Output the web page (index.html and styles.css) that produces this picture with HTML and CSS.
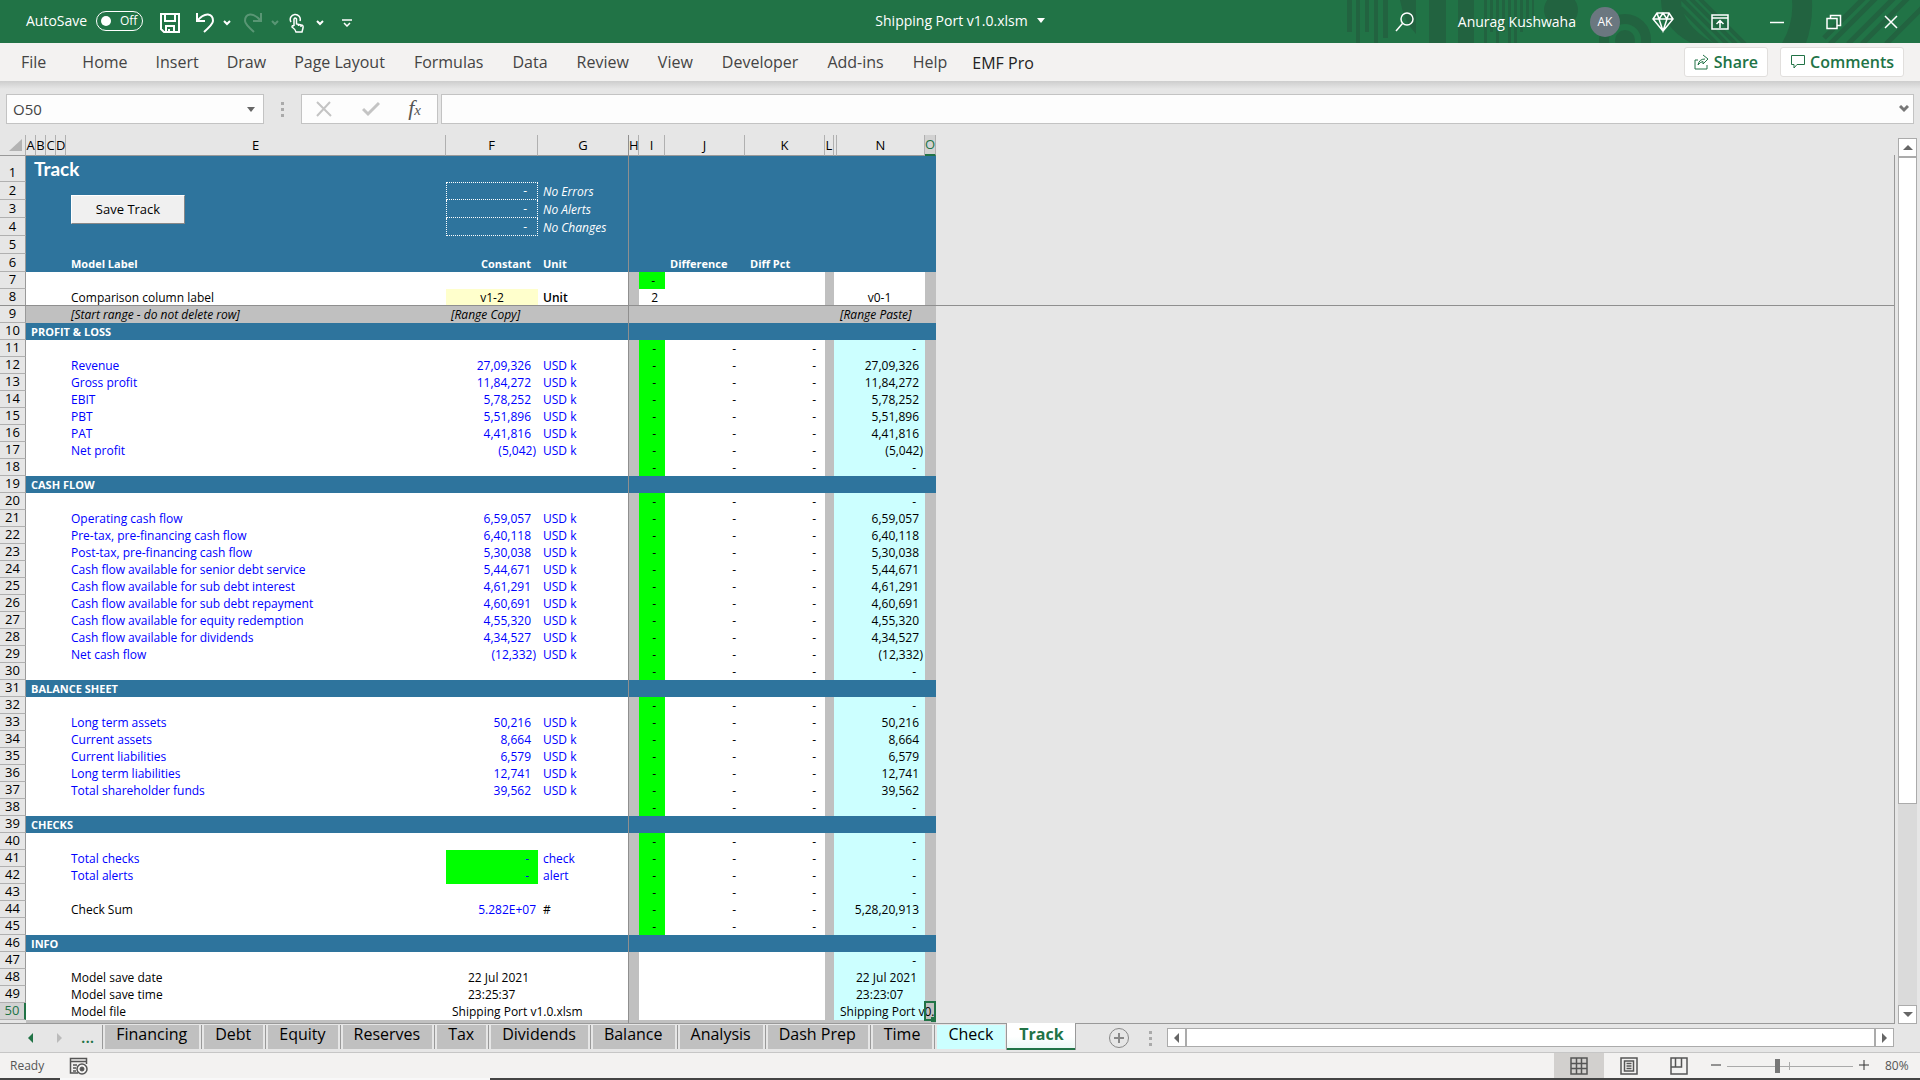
FILE: index.html
```
<!DOCTYPE html>
<html lang="en">
<head>
<meta charset="utf-8">
<title>Shipping Port v1.0.xlsm</title>
<link rel="stylesheet" href="styles.css">
</head>
<body>
<header class="titlebar">
  <svg class="deco" width="590" height="43" viewBox="1330 0 590 43" aria-hidden="true">
    <g fill="#226340">
      <path d="M1347 0h5v32h-5zM1356 0h4v43h-4zM1365 0h4v32h-4zM1374 0h4v43h-4zM1383 0h5v38h-5zM1400 0h16v34q-12-12-16-34zM1429 0h17v43h-17zM1458 0h16v43h-16z"/>
      <path d="M1484 0h3v43h-3zM1490 0h3v32h-3zM1496 0h3v43h-3zM1502 0h3v32h-3zM1508 0h3v43h-3zM1514 0h3v43h-3zM1520 0h3v32h-3zM1526 0h3v26h-3zM1532 0h2v18h-2z"/>
      <circle cx="1561" cy="10" r="17"/><circle cx="1625" cy="40" r="10"/>
      <path d="M1661 0h20q0 24 32 43h-22q-30-16-30-43zM1792 0h20q1 24-6 43h-24q12-20 10-43z"/>
    </g>
    <g fill="none" stroke="#226340">
      <circle cx="1625" cy="40" r="21" stroke-width="10"/>
      <path stroke-width="4" d="M1681 8l36 36M1681-2l46 46M1688-4l48 48M1697-4l48 48"/>
      <path stroke-width="5" d="M1824 38l40-40M1830 44l46-46M1848 44l46-46M1862 44l46-46M1886 44l36-36"/>
    </g>
  </svg>
  <div class="quick">
    <span>AutoSave</span>
    <button class="toggle" aria-pressed="false"><i></i>Off</button>
    <button class="save" aria-label="Save"><svg width="20" height="20" viewBox="0 0 20 20"><path d="M1 1h18v18H4l-3-3zM5 1v7h10V1M6 19v-6h8v6M9 19v-3"/></svg></button>
    <button aria-label="Undo"><svg width="20" height="20" viewBox="0 0 20 20"><path stroke-width="2" d="M2 0v8h8M2 8Q8 1 13 1.500Q18 2 18 8Q18 11 9 19"/></svg></button>
    <button aria-label="Undo history"><svg width="8" height="6" viewBox="0 0 8 6"><path stroke-width="2" d="M1 1l3 3 3-3"/></svg></button>
    <button class="dim" aria-label="Redo"><svg width="20" height="20" viewBox="0 0 20 20"><path stroke-width="2" d="M18 0v8h-8M18 8Q12 1 7 1.500Q2 2 2 8Q2 11 11 19"/></svg></button>
    <button class="dim" aria-label="Redo history"><svg width="8" height="6" viewBox="0 0 8 6"><path stroke-width="2" d="M1 1l3 3 3-3"/></svg></button>
    <button aria-label="Touch mode"><svg width="16" height="20" viewBox="0 0 16 20"><path stroke-width="1.500" d="M2 9a5 5 0 1 1 9-1M5 13V6q1-2 2.500 0v5l5 1q2 0 1.500 3l-1 4H7q-1-3-4-5 0-2 2-1M9.500 11v2M12 12v2"/></svg></button>
    <button aria-label="Touch mode options"><svg width="8" height="6" viewBox="0 0 8 6"><path stroke-width="2" d="M1 1l3 3 3-3"/></svg></button>
    <button class="custom" aria-label="Customize toolbar"><svg width="10" height="8" viewBox="0 0 10 8"><path stroke-width="1.500" d="M0 1h10M2 4l3 3 3-3"/></svg></button>
  </div>
  <button class="docname">Shipping Port v1.0.xlsm <i class="caret"></i></button>
  <div class="account">
    <button aria-label="Search"><svg width="24" height="24" viewBox="0 0 24 24"><circle cx="14" cy="9" r="6"/><path d="M9.500 13.500L3 21"/></svg></button>
    <span class="user">Anurag Kushwaha</span><span class="avatar">AK</span>
    <div class="winctl">
      <button aria-label="Premium"><svg width="24" height="24" viewBox="0 0 24 24"><path d="M6 3h12l4 6-10 12L2 9zM2 9h20M6 3l2 6 4 12 4-12 2-6M8 9l4-6 4 6"/></svg></button>
      <button aria-label="Ribbon display options"><svg width="24" height="24" viewBox="0 0 24 24"><path d="M4 5h16v14H4zM4 8h16M12 18v-7M8.500 14l3.500-3.500 3.500 3.500"/></svg></button>
      <button aria-label="Minimize"><svg width="24" height="24" viewBox="0 0 24 24"><path d="M5 12.500h14"/></svg></button>
      <button aria-label="Restore"><svg width="24" height="24" viewBox="0 0 24 24"><path d="M5 8.500h10v10H5zM8.500 8V5.500h10v10H15"/></svg></button>
      <button aria-label="Close"><svg width="24" height="24" viewBox="0 0 24 24"><path d="M6 6l12 12M18 6L6 18"/></svg></button>
    </div>
  </div>
</header>

<nav class="ribbon">
  <button class="file">File</button><button>Home</button><button>Insert</button><button>Draw</button><button>Page Layout</button><button>Formulas</button><button>Data</button><button>Review</button><button>View</button><button>Developer</button><button>Add-ins</button><button>Help</button><button class="addin">EMF Pro</button>
  <div class="collab">
    <button><svg width="16" height="16" viewBox="0 0 16 16"><path d="M4 6H1v9h12v-4M4 11q1-6 7-6M9 1l5 4-5 5V7.500Q6 8 4 11"/></svg>Share</button>
    <button><svg width="16" height="16" viewBox="0 0 16 16"><path d="M1.500 1.500h13v9H7l-3 3.500v-3.500H1.500z"/></svg>Comments</button>
  </div>
</nav>

<div class="formula">
  <div class="namebox"><input type="text" value="O50" aria-label="Name box"><button aria-label="Names"><i class="caret"></i></button></div>
  <span class="dots"><i></i><i></i><i></i></span>
  <div class="fxbox">
    <button aria-label="Cancel"><svg width="18" height="16" viewBox="0 0 18 16"><path d="M2 1l14 14M15 1L2 15"/></svg></button>
    <button aria-label="Enter"><svg width="18" height="16" viewBox="0 0 18 16"><path stroke-width="3" d="M1 8l5 5L17 2"/></svg></button>
    <button class="fx" aria-label="Insert function"><em>f</em><em class="x">x</em></button>
  </div>
  <div class="entry"><input type="text" aria-label="Formula"><button aria-label="Expand formula bar"><svg width="10" height="8" viewBox="0 0 10 8"><path d="M1 1l4 4 4-4"/></svg></button></div>
</div>

<main class="work">
<div class="pane">
<span class="split-h"></span><span class="split-v"></span>
<table class="sheet">
<colgroup><col class="w26"><col class="w10"><col class="w10"><col class="w10"><col class="w10"><col class="w380"><col class="w92"><col class="w91"><col class="w10"><col class="w26"><col class="w80"><col class="w80"><col class="w9"><col class="w3"><col class="w88"><col class="w11"></colgroup>
<thead><tr><th class="corner"><i></i><th>A<th>B<th>C<th>D<th>E<th>F<th>G<th>H<th>I<th>J<th>K<th>L<th><th>N<th class="on">O</tr></thead>
<tbody class="top">
<tr class="r1"><th>1<td class="title" colspan="15">Track</tr>
<tr><th>2<td colspan="4"><td class="host"><button class="savetrack">Save Track</button><td class="box first d">-<td class="i">No Errors<td colspan="8"></tr>
<tr><th>3<td colspan="4"><td><td class="box d">-<td class="i">No Alerts<td colspan="8"></tr>
<tr><th>4<td colspan="4"><td><td class="box d">-<td class="i">No Changes<td colspan="8"></tr>
<tr><th>5<td colspan="15"></tr>
<tr class="heads"><th>6<td colspan="4"><td>Model Label<td class="n">Constant<td>Unit<td><td><td>Difference<td>Diff Pct<td colspan="4"></tr>
</tbody>
<tbody class="labels">
<tr><th>7<td colspan="4"><td><td><td><td><td class="ok d">-<td><td><td><td colspan="2"><td></tr>
<tr><th>8<td colspan="4"><td>Comparison column label<td class="input c">v1-2<td class="b">Unit<td><td class="n">2<td><td><td><td class="c" colspan="2">v0-1<td></tr>
</tbody>
<tbody>
<tr class="range"><th>9<td colspan="4"><td>[Start range - do not delete row]<td>[Range Copy]<td><td><td><td><td><td><td class="paste" colspan="2">[Range Paste]<td></tr>
<tr class="sec"><th>10<td colspan="15">PROFIT &amp; LOSS</tr>
</tbody>
<tbody class="data">
<tr><th>11<td colspan="4"><td><td><td><td><td>-<td>-<td>-<td><td class="d" colspan="2">-<td></tr>
<tr><th>12<td colspan="4"><td>Revenue<td>27,09,326<td>USD k<td><td>-<td>-<td>-<td><td colspan="2">27,09,326<td></tr>
<tr><th>13<td colspan="4"><td>Gross profit<td>11,84,272<td>USD k<td><td>-<td>-<td>-<td><td colspan="2">11,84,272<td></tr>
<tr><th>14<td colspan="4"><td>EBIT<td>5,78,252<td>USD k<td><td>-<td>-<td>-<td><td colspan="2">5,78,252<td></tr>
<tr><th>15<td colspan="4"><td>PBT<td>5,51,896<td>USD k<td><td>-<td>-<td>-<td><td colspan="2">5,51,896<td></tr>
<tr><th>16<td colspan="4"><td>PAT<td>4,41,816<td>USD k<td><td>-<td>-<td>-<td><td colspan="2">4,41,816<td></tr>
<tr><th>17<td colspan="4"><td>Net profit<td class="neg">(5,042)<td>USD k<td><td>-<td>-<td>-<td><td class="neg" colspan="2">(5,042)<td></tr>
<tr><th>18<td colspan="4"><td><td><td><td><td>-<td>-<td>-<td><td class="d" colspan="2">-<td></tr>
<tr class="sec"><th>19<td colspan="15">CASH FLOW</tr>
<tr><th>20<td colspan="4"><td><td><td><td><td>-<td>-<td>-<td><td class="d" colspan="2">-<td></tr>
<tr><th>21<td colspan="4"><td>Operating cash flow<td>6,59,057<td>USD k<td><td>-<td>-<td>-<td><td colspan="2">6,59,057<td></tr>
<tr><th>22<td colspan="4"><td>Pre-tax, pre-financing cash flow<td>6,40,118<td>USD k<td><td>-<td>-<td>-<td><td colspan="2">6,40,118<td></tr>
<tr><th>23<td colspan="4"><td>Post-tax, pre-financing cash flow<td>5,30,038<td>USD k<td><td>-<td>-<td>-<td><td colspan="2">5,30,038<td></tr>
<tr><th>24<td colspan="4"><td>Cash flow available for senior debt service<td>5,44,671<td>USD k<td><td>-<td>-<td>-<td><td colspan="2">5,44,671<td></tr>
<tr><th>25<td colspan="4"><td>Cash flow available for sub debt interest<td>4,61,291<td>USD k<td><td>-<td>-<td>-<td><td colspan="2">4,61,291<td></tr>
<tr><th>26<td colspan="4"><td>Cash flow available for sub debt repayment<td>4,60,691<td>USD k<td><td>-<td>-<td>-<td><td colspan="2">4,60,691<td></tr>
<tr><th>27<td colspan="4"><td>Cash flow available for equity redemption<td>4,55,320<td>USD k<td><td>-<td>-<td>-<td><td colspan="2">4,55,320<td></tr>
<tr><th>28<td colspan="4"><td>Cash flow available for dividends<td>4,34,527<td>USD k<td><td>-<td>-<td>-<td><td colspan="2">4,34,527<td></tr>
<tr><th>29<td colspan="4"><td>Net cash flow<td class="neg">(12,332)<td>USD k<td><td>-<td>-<td>-<td><td class="neg" colspan="2">(12,332)<td></tr>
<tr><th>30<td colspan="4"><td><td><td><td><td>-<td>-<td>-<td><td class="d" colspan="2">-<td></tr>
<tr class="sec"><th>31<td colspan="15">BALANCE SHEET</tr>
<tr><th>32<td colspan="4"><td><td><td><td><td>-<td>-<td>-<td><td class="d" colspan="2">-<td></tr>
<tr><th>33<td colspan="4"><td>Long term assets<td>50,216<td>USD k<td><td>-<td>-<td>-<td><td colspan="2">50,216<td></tr>
<tr><th>34<td colspan="4"><td>Current assets<td>8,664<td>USD k<td><td>-<td>-<td>-<td><td colspan="2">8,664<td></tr>
<tr><th>35<td colspan="4"><td>Current liabilities<td>6,579<td>USD k<td><td>-<td>-<td>-<td><td colspan="2">6,579<td></tr>
<tr><th>36<td colspan="4"><td>Long term liabilities<td>12,741<td>USD k<td><td>-<td>-<td>-<td><td colspan="2">12,741<td></tr>
<tr><th>37<td colspan="4"><td>Total shareholder funds<td>39,562<td>USD k<td><td>-<td>-<td>-<td><td colspan="2">39,562<td></tr>
<tr><th>38<td colspan="4"><td><td><td><td><td>-<td>-<td>-<td><td class="d" colspan="2">-<td></tr>
<tr class="sec"><th>39<td colspan="15">CHECKS</tr>
<tr><th>40<td colspan="4"><td><td><td><td><td>-<td>-<td>-<td><td class="d" colspan="2">-<td></tr>
<tr><th>41<td colspan="4"><td>Total checks<td class="ok d">-<td>check<td><td>-<td>-<td>-<td><td class="d" colspan="2">-<td></tr>
<tr><th>42<td colspan="4"><td>Total alerts<td class="ok d">-<td>alert<td><td>-<td>-<td>-<td><td class="d" colspan="2">-<td></tr>
<tr><th>43<td colspan="4"><td><td><td><td><td>-<td>-<td>-<td><td class="d" colspan="2">-<td></tr>
<tr><th>44<td colspan="4"><td class="k">Check Sum<td class="neg">5.282E+07<td class="k">#<td><td>-<td>-<td>-<td><td colspan="2">5,28,20,913<td></tr>
<tr><th>45<td colspan="4"><td><td><td><td><td>-<td>-<td>-<td><td class="d" colspan="2">-<td></tr>
<tr class="sec"><th>46<td colspan="15">INFO</tr>
</tbody>
<tbody class="data info">
<tr><th>47<td colspan="4"><td><td><td><td><td><td><td><td><td class="d" colspan="2">-<td></tr>
<tr><th>48<td colspan="4"><td>Model save date<td class="date">22 Jul 2021<td><td><td><td><td><td><td class="date" colspan="2">22 Jul 2021<td></tr>
<tr><th>49<td colspan="4"><td>Model save time<td class="date">23:25:37<td><td><td><td><td><td><td class="date" colspan="2">23:23:07<td></tr>
<tr><th class="on">50<td colspan="4"><td>Model file<td class="text">Shipping Port v1.0.xlsm<td><td><td><td><td><td><td class="text" colspan="2">Shipping Port v0.<td class="host"><span class="cursor"></span></tr>
</tbody>
</table>
<div class="rest"></div>
</div>
<div class="vscroll">
  <button aria-label="Scroll up"><i class="up"></i></button><div class="thumb"></div><div class="track"></div><button aria-label="Scroll down"><i class="down"></i></button>
</div>
</main>

<div class="tabsrow">
  <div class="tabs">
    <button class="nav" aria-label="Previous sheets"><i class="left"></i></button>
    <button class="nav off" aria-label="Next sheets"><i class="right"></i></button>
    <button class="more">...</button>
    <span class="tab"><button>Financing</button></span><span class="tab"><button>Debt</button></span><span class="tab"><button>Equity</button></span><span class="tab"><button>Reserves</button></span><span class="tab"><button>Tax</button></span><span class="tab"><button>Dividends</button></span><span class="tab"><button>Balance</button></span><span class="tab"><button>Analysis</button></span><span class="tab"><button>Dash Prep</button></span><span class="tab"><button>Time</button></span><span class="tab check"><button>Check</button></span><button class="current">Track</button>
    <button class="add" aria-label="New sheet"><svg width="22" height="22" viewBox="0 0 22 22"><circle cx="11" cy="11" r="9.500"/><path stroke-width="2" d="M11 6v10M6 11h10"/></svg></button>
    <span class="dots"><i></i><i></i><i></i></span>
  </div>
  <div class="hscroll"><button aria-label="Scroll left"><i class="left"></i></button><div class="thumb"></div><button aria-label="Scroll right"><i class="right"></i></button></div>
</div>

<footer class="status">
  <span>Ready</span>
  <button aria-label="Record macro"><svg width="20" height="18" viewBox="0 0 20 18"><path stroke-width="1.500" d="M9 16H1.500V1.500h16V7M1 4.500h17M4 8h4M4 11h3M4 14h3"/><circle cx="13" cy="12" r="5" stroke-width="1.500"/><circle cx="13" cy="12" r="2" fill="#555"/></svg></button>
  <div class="views">
    <button class="active" aria-label="Normal"><svg width="18" height="18" viewBox="0 0 18 18"><path stroke-width="1.500" d="M1 1h16v16H1zM6.500 1v16M11.500 1v16M1 6.500h16M1 11.500h16"/></svg></button>
    <button aria-label="Page layout"><svg width="18" height="18" viewBox="0 0 18 18"><path stroke-width="1.500" d="M1 1h16v16H1zM4.500 4h9v10h-9zM6.500 6.500h5M6.500 9h5M6.500 11.500h5"/></svg></button>
    <button aria-label="Page breaks"><svg width="18" height="18" viewBox="0 0 18 18"><path stroke-width="1.500" d="M1 1h16v16H1zM5.500 1v9M11.500 1v9H1"/></svg></button>
  </div>
  <button class="zoomer" aria-label="Zoom out"><svg width="12" height="12" viewBox="0 0 12 12"><path d="M1 6h10"/></svg></button>
  <input type="range" min="0" max="100" value="40" aria-label="Zoom">
  <button class="zoomer" aria-label="Zoom in"><svg width="12" height="12" viewBox="0 0 12 12"><path d="M1 6h10M6 1v10"/></svg></button>
  <span class="pct">80%</span>
</footer>
<div class="taskedge"></div>
</body>
</html>
```
FILE: styles.css
```
* { box-sizing: border-box; }
body {
  margin: 0;
  min-height: 100vh;
  display: flex;
  flex-direction: column;
  background: #e6e6e6;
  font: 12px/17px "Open Sans", sans-serif;
  color: #000;
}
button, input { font: inherit; color: inherit; }
button { margin: 0; padding: 0; border: 0; background: none; display: flex; align-items: center; justify-content: center; white-space: nowrap; }
svg { display: block; fill: none; stroke: currentColor; }

/* title bar */
.titlebar { position: relative; display: grid; grid-template-columns: 1fr auto 1fr; align-items: center; height: 43px; background: #217346; color: #fff; font-size: 14px; }
.deco { position: absolute; right: 0; top: 0; stroke: none; }
.quick { display: flex; align-items: center; padding: 0 0 2px 26px; }
.toggle { position: relative; width: 47px; height: 20px; margin: 0 17px 0 9px; padding-left: 18px; border: 1px solid #fff; border-radius: 10px; font-size: 12px; }
.toggle i { position: absolute; left: 4px; top: 4px; width: 10px; height: 10px; border-radius: 50%; background: #fff; }
.quick .save { margin-right: 15px; }
.save svg { stroke-width: 2; }
.quick button + button[aria-label$="history"] { margin: 0 12px 0 8px; }
.quick button[aria-label="Touch mode"] { margin: 0 11px 0 -2px; }
.quick button:not(.toggle) { padding-top: 4px; }
.quick .custom { margin-left: 18px; }
.dim { opacity: .25; }
.docname { position: relative; gap: 9px; padding-bottom: 2px; }
.caret { border: 4px solid transparent; border-top: 5px solid currentColor; border-bottom: 0; }
.account { position: relative; display: flex; align-items: center; justify-content: flex-end; padding-right: 17px; }
.user { margin-left: 41px; }
.avatar { width: 30px; height: 30px; margin: 0 31px 0 14px; border-radius: 50%; background: #6b7780; font-size: 12px; line-height: 30px; text-align: center; }
.winctl { display: flex; gap: 33px; }
.account svg { stroke-width: 1.5; }

/* ribbon */
.ribbon { display: flex; align-items: center; height: 38px; padding: 0 16px 0 7px; background: #f3f2f1; color: #444; font-size: 16px; }
.ribbon > button { height: 30px; padding: 0 14px; }
.ribbon > button:nth-child(n+6) { margin-left: 1px; }
.ribbon .file { margin-right: 8px; }
.ribbon .addin { padding: 2px 10px 0; color: #222; }
.collab { display: flex; gap: 12px; margin-left: auto; color: #217346; font-weight: 600; }
.collab button { gap: 4px; height: 30px; padding: 0 9px; background: #fff; border: 1px solid #e1dfdd; border-radius: 3px; }

/* formula bar */
.formula { display: flex; align-items: center; padding: 13px 6px 11px; background: linear-gradient(#cdcdcd, #e6e6e6 8px); font-size: 15px; }
.namebox, .fxbox, .entry { display: flex; align-items: center; height: 30px; background: #fdfdfd; border: 1px solid #c3c3c3; color: #444; }
.formula input { flex: 1; min-width: 0; border: 0; padding: 0 6px; background: none; outline: 0; }
.namebox { width: 258px; }
.namebox button { padding-right: 8px; color: #666; }
.dots { display: flex; flex-direction: column; gap: 3px; }
.dots i { width: 3px; height: 3px; background: #aaa; }
.formula .dots { margin: 0 17px; }
.fxbox { width: 137px; margin-right: 3px; justify-content: space-between; padding: 0 16px 0 13px; color: #c4c4c4; }
.fxbox svg { stroke-width: 2; }
.fx { align-items: baseline; color: #555; font: 22px/26px "Liberation Serif", serif; }
.fx .x { font-size: 15px; }
.entry { flex: 1; }
.entry button { padding-right: 4px; color: #777; }
.entry svg { stroke-width: 3; }

/* worksheet */
.work { flex: 1; display: flex; }
.pane { position: relative; flex: 1; min-width: 0; display: flex; flex-direction: column; overflow: hidden; border-bottom: 1px solid #999; }
.pane::after { content: ""; position: absolute; right: 0; top: 20px; bottom: 0; width: 1px; background: #999; }
.split-h { position: absolute; left: 0; right: 0; top: 170px; height: 1px; background: #8f8f8f; }
.split-v { position: absolute; left: 628px; top: 0; bottom: 0; width: 1px; background: #8f8f8f; z-index: 1; }
.rest { flex: 1; width: 910px; margin-left: 26px; background: #c0c0c0; }
.sheet { width: 936px; table-layout: fixed; border-collapse: separate; border-spacing: 0; }
.w3 { width: 3px; } .w9 { width: 9px; } .w10 { width: 10px; } .w11 { width: 11px; } .w26 { width: 26px; } .w80 { width: 80px; } .w88 { width: 88px; } .w91 { width: 91px; } .w92 { width: 92px; } .w380 { width: 380px; }
.sheet th { padding: 0; font-weight: 400; font-size: 13px; text-align: center; }
.sheet thead th { height: 20px; line-height: 19px; border-right: 1px solid #b0b0b0; border-bottom: 1px solid #999; }
.sheet thead .corner i { display: block; width: 13px; height: 12px; margin-left: 9px; background: #b3b3b3; clip-path: polygon(100% 0, 100% 100%, 0 100%); }
.sheet tbody th { vertical-align: bottom; line-height: 14px; padding-bottom: 2px; border-right: 1px solid #999; border-bottom: 1px solid #b0b0b0; }
.sheet thead th.on { background: #d2d2d2; color: #217346; border-bottom: 2px solid #217346; }
.sheet tbody th.on { background: #d2d2d2; color: #217346; border-right: 2px solid #217346; }
.sheet td { height: 17px; padding: 0 5px; line-height: 17px; white-space: nowrap; vertical-align: bottom; background: #fff; }
.top td, .sheet .sec td { background: #2e749d; color: #fff; }
.top td { height: 18px; }
.top .r1 td { height: 26px; }
.sheet td.title { padding-left: 8px; font: 700 19px/26px Lato, sans-serif; vertical-align: middle; }
.host { position: relative; }
.savetrack { position: absolute; left: 5px; top: 13px; width: 114px; height: 29px; background: #f0f0f0; border: 1px solid #fff; border-right-color: #888; border-bottom-color: #888; color: #000; font-size: 13px; }
.sheet td.box { border: 1px dotted #fff; border-top-width: 0; }
.sheet td.box.first { border-top-width: 1px; line-height: 16px; }
.i, .range td { font-style: italic; }
.sheet .paste { padding-left: 6px; }
.heads td, .sec td { font-size: 11px; font-weight: 700; }
.sheet .sec td { box-shadow: 0 1px #2e749d; }
.b { font-weight: 600; }
.c { text-align: center; }
.sheet .n { text-align: right; padding-right: 7px; }
.sheet .d { text-align: right; padding-right: 10px; }
.sheet .input { background: #ffc; }
.sheet td.ok { background: #0f0; }
.labels td:nth-child(6), .labels td:nth-child(10), .labels td:nth-child(12), .sheet .range td { background: #c0c0c0; }
.data td:nth-child(3), .data td:nth-child(4), .data td:nth-child(5) { color: #00f; }
.data td:nth-child(4) { text-align: right; padding-right: 7px; }
.data td:nth-child(6), .data td:nth-child(10), .data td:nth-child(12) { background: #c0c0c0; }
.data td:nth-child(7), .data td:nth-child(8), .data td:nth-child(9) { text-align: right; padding-right: 9px; }
.data td:nth-child(7) { background: #0f0; }
.data td:nth-child(11) { background: #cff; text-align: right; padding-right: 6px; }
.data.info td:nth-child(7) { background: #fff; }
.data.info td { color: #000; }
.data td.k { color: #000; }
.data td.neg { padding-right: 2px; }
.sheet .data td.d, .sheet .data .d { padding-right: 9px; }
.sheet .data td.date { text-align: left; padding-left: 22px; }
.sheet .data td.text { position: relative; z-index: 1; text-align: left; padding: 0 0 0 6px; }
.cursor { position: absolute; z-index: 2; left: -1px; top: -2px; width: 12px; height: 20px; border: 2px solid #217346; }
.cursor::after { content: ""; position: absolute; right: -2px; bottom: -3px; width: 5px; height: 5px; background: #217346; }

/* scroll bars */
.up, .down, .left, .right { width: 0; height: 0; border: 5px solid transparent; }
.up { border-bottom-color: #666; border-top: 0; }
.down { border-top-color: #666; border-bottom: 0; }
.left { border-right-color: #666; border-left: 0; }
.right { border-left-color: #666; border-right: 0; }
.vscroll { display: flex; flex-direction: column; width: 25px; padding: 3px 3px 0 3px; }
.vscroll button, .hscroll button { width: 19px; height: 19px; background: #fff; border: 1px solid #ababab; }
.thumb { background: #fff; border: 1px solid #ababab; }
.vscroll .thumb { flex: 16; }
.vscroll .track { flex: 5; background: #dadada; }
.hscroll { flex: 1; display: flex; padding: 4px 26px 0 0; }
.hscroll .thumb { flex: 1; height: 19px; }

/* sheet tabs */
.tabsrow { display: flex; height: 29px; border-bottom: 1px solid #c6c6c6; font-size: 16px; }
.tabs { width: 60.8%; display: flex; align-items: flex-start; padding: 1px 15px 0 28px; }
.nav { height: 26px; margin-right: 24px; }
.nav .left { border-right-color: #217346; }
.nav.off { margin-right: 19px; }
.nav .right { border-left-color: #bbb; }
.more { height: 24px; margin-right: 8px; color: #217346; font-weight: 600; }
.tab { margin-right: 2px; padding-left: 2px; border-left: 1px solid #999; }
.tab button { height: 24px; padding: 0 12px 6px 11px; background: #c0c0c0; }
.tab.check { margin-right: 1px; }
.tab.check button { background: #cff; }
.current { height: 27px; margin-top: -2px; padding: 0 11px 4px 12px; background: linear-gradient(#fff 50%, #e8f8f4); border: 1px solid #999; border-width: 0 1px; box-shadow: inset 0 -2px #217346; color: #217346; font-weight: 700; position: relative; }
.add { margin: 2px 0 0 32px; color: #888; }
.tabs .dots { margin: 6px 0 0 auto; }

/* status bar */
.status { display: flex; align-items: center; height: 25px; padding: 0 9px 0 10px; background: #f3f2f1; color: #555; }
.status > button:first-of-type { margin-left: 25px; }
.views { display: flex; margin-left: auto; }
.views button { width: 50px; height: 25px; }
.views .active { background: #d2d0ce; }
.zoomer { width: 12px; height: 12px; margin: 0 5px 2px; color: #333; }
.views + .zoomer { margin-left: 6px; }
.status input { appearance: none; width: 126px; height: 14px; margin: 0; background: linear-gradient(#aaa, #aaa) 62px 3px / 1px 8px no-repeat, linear-gradient(#aaa, #aaa) 0 7px / 100% 1px no-repeat; }
.status input::-webkit-slider-thumb { appearance: none; width: 5px; height: 14px; background: #777; }
.pct { width: 26px; margin-left: 10px; }
.taskedge { height: 2px; background: linear-gradient(90deg, #444 60px, #f8f8f8 60px 490px, #444 490px); }
```
